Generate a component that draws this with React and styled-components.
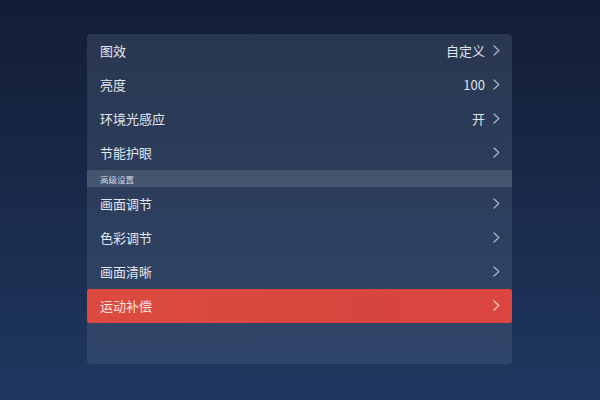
import React from 'react'
import styled, { createGlobalStyle } from 'styled-components'

const GlobalStyle = createGlobalStyle`
  html, body {
    margin: 0;
    padding: 0;
  }
  body {
    font-family: "Noto Sans CJK SC", "Noto Sans", sans-serif;
  }
`

const Screen = styled.div`
  width: 600px;
  height: 400px;
  box-sizing: border-box;
  padding-top: 34px;
  display: flex;
  justify-content: center;
  align-items: flex-start;
  background: linear-gradient(180deg, #131d35 0%, #1a2b4c 55%, #1f3760 100%);
`

const Panel = styled.div`
  width: 425px;
  height: 330px;
  margin-left: -1px;
  border-radius: 4px;
  overflow: hidden;
  display: flex;
  flex-direction: column;
  background: linear-gradient(180deg, #2a3751 0%, #2c3e5c 50%, #30466a 100%);
`

const Row = styled.div`
  height: 34px;
  box-sizing: border-box;
  flex-shrink: 0;
  display: flex;
  align-items: center;
  padding: 0 12px 2px 13px;
  border-radius: ${p => (p.$active ? '3px' : '0')};
  background: ${p =>
    p.$active ? 'linear-gradient(90deg, #dc4a3f 0%, #d7463e 70%, #dc4540 100%)' : 'transparent'};
`

const Label = styled.span`
  flex: 1;
  font-size: 13px;
  line-height: 1;
  color: ${p => (p.$active ? '#f6e4e2' : '#e2e6ee')};
`

const Value = styled.span`
  font-size: 13px;
  line-height: 1;
  color: #dfe3eb;
  margin-right: 8px;
`

const Chevron = styled.svg`
  width: 7px;
  height: 11px;
  flex-shrink: 0;
`

const SectionHeader = styled.div`
  height: 17px;
  flex-shrink: 0;
  display: flex;
  align-items: center;
  padding-left: 13px;
  background: #45556e;
  font-size: 8.5px;
  color: #cfd6e2;
`

const Arrow = ({ active }) => (
  <Chevron viewBox="0 0 7 11">
    <path
      d="M1 1 L5.8 5.5 L1 10"
      fill="none"
      stroke={active ? '#f2c8c4' : '#a8b2c3'}
      strokeWidth="1.3"
      strokeLinecap="round"
      strokeLinejoin="round"
    />
  </Chevron>
)

const basic = [
  { label: '图效', value: '自定义' },
  { label: '亮度', value: '100' },
  { label: '环境光感应', value: '开' },
  { label: '节能护眼' },
]

const advanced = [
  { label: '画面调节' },
  { label: '色彩调节' },
  { label: '画面清晰' },
  { label: '运动补偿', active: true },
]

function MenuRow({ label, value, active }) {
  return (
    <Row $active={active}>
      <Label $active={active}>{label}</Label>
      {value && <Value>{value}</Value>}
      <Arrow active={active} />
    </Row>
  )
}

export default function App() {
  return (
    <>
      <GlobalStyle />
      <Screen>
        <Panel>
          {basic.map(item => (
            <MenuRow key={item.label} {...item} />
          ))}
          <SectionHeader>高级设置</SectionHeader>
          {advanced.map(item => (
            <MenuRow key={item.label} {...item} />
          ))}
        </Panel>
      </Screen>
    </>
  )
}
